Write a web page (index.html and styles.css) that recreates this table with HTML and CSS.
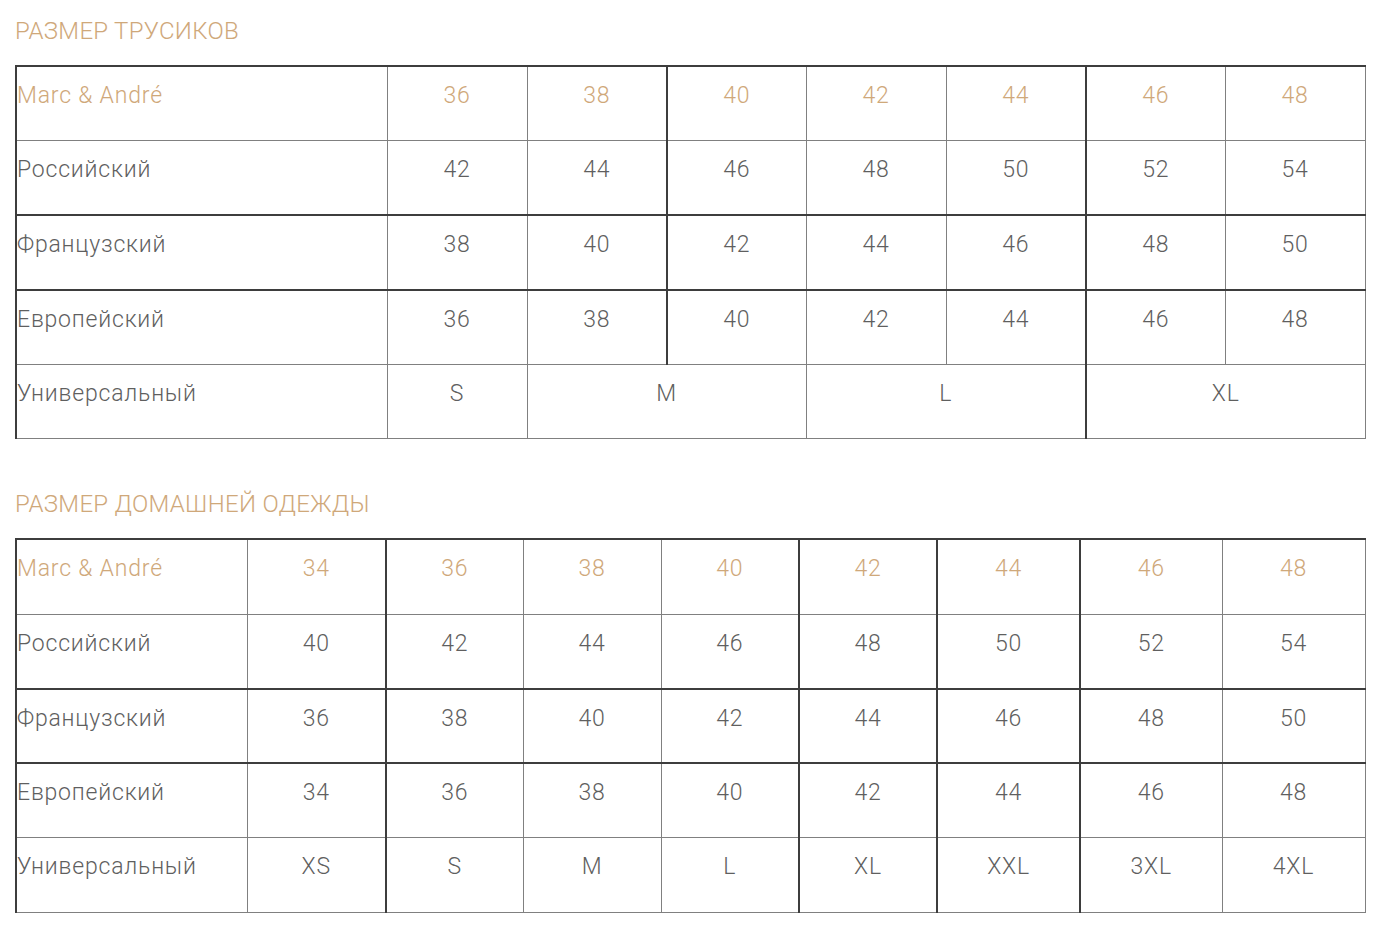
FILE: index.html
```html
<!DOCTYPE html>
<html lang="ru">
<head>
<meta charset="utf-8">
<title>Размеры</title>
<link rel="stylesheet" href="styles.css">
</head>
<body>
<section class="block">
  <h2 class="title">РАЗМЕР ТРУСИКОВ</h2>
  <table class="sizes t1">
    <colgroup>
      <col class="c-label1"><col class="c140"><col class="c140"><col class="c139"><col class="c140"><col class="c140"><col class="c139"><col class="c140">
    </colgroup>
    <tr class="head">
      <td class="label">Marc &amp; André</td><td>36</td><td>38</td><td class="dl">40</td><td>42</td><td>44</td><td class="dl">46</td><td>48</td>
    </tr>
    <tr>
      <td class="label">Российский</td><td>42</td><td>44</td><td class="dl">46</td><td>48</td><td>50</td><td class="dl">52</td><td>54</td>
    </tr>
    <tr class="dt">
      <td class="label">Французский</td><td>38</td><td>40</td><td class="dl">42</td><td>44</td><td>46</td><td class="dl">48</td><td>50</td>
    </tr>
    <tr class="dt">
      <td class="label">Европейский</td><td>36</td><td>38</td><td class="dl">40</td><td>42</td><td>44</td><td class="dl">46</td><td>48</td>
    </tr>
    <tr>
      <td class="label">Универсальный</td><td>S</td><td colspan="2">M</td><td colspan="2">L</td><td colspan="2" class="dl">XL</td>
    </tr>
  </table>
</section>

<section class="block second">
  <h2 class="title">РАЗМЕР ДОМАШНЕЙ ОДЕЖДЫ</h2>
  <table class="sizes t2">
    <colgroup>
      <col class="c-label2"><col class="c139"><col class="c137"><col class="c138"><col class="c138"><col class="c138"><col class="c143"><col class="c142"><col class="c143">
    </colgroup>
    <tr class="head">
      <td class="label">Marc &amp; André</td><td>34</td><td class="dl">36</td><td>38</td><td>40</td><td class="dl">42</td><td class="dl">44</td><td class="dl">46</td><td>48</td>
    </tr>
    <tr>
      <td class="label">Российский</td><td>40</td><td class="dl">42</td><td>44</td><td>46</td><td class="dl">48</td><td class="dl">50</td><td class="dl">52</td><td>54</td>
    </tr>
    <tr class="dt">
      <td class="label">Французский</td><td>36</td><td class="dl">38</td><td>40</td><td>42</td><td class="dl">44</td><td class="dl">46</td><td class="dl">48</td><td>50</td>
    </tr>
    <tr class="dt">
      <td class="label">Европейский</td><td>34</td><td class="dl">36</td><td>38</td><td>40</td><td class="dl">42</td><td class="dl">44</td><td class="dl">46</td><td>48</td>
    </tr>
    <tr>
      <td class="label">Универсальный</td><td>XS</td><td class="dl">S</td><td>M</td><td>L</td><td class="dl">XL</td><td class="dl">XXL</td><td class="dl">3XL</td><td>4XL</td>
    </tr>
  </table>
</section>
</body>
</html>
```

FILE: styles.css
```css
html, body {
  margin: 0;
  padding: 0;
  background: #ffffff;
}

body {
  font-family: Roboto, "Liberation Sans", Arial, sans-serif;
  font-weight: 300;
  color: #5f5f5f;
  padding: 16px 15px 0 15px;
}

.block {
  width: 1350px;
}

.second {
  margin-top: 50px;
}

.title {
  margin: 0 0 19px 0;
  font-size: 24px;
  line-height: 30px;
  font-weight: 300;
  color: #cfa87a;
  letter-spacing: 0.3px;
}

.sizes {
  width: 1350px;
  table-layout: fixed;
  border-collapse: collapse;
  border-top: 2px solid #3d3d3d;
  border-left: 2px solid #3d3d3d;
  border-right: 1px solid #808080;
  border-bottom: 1px solid #808080;
}

.sizes td {
  border: 1px solid #808080;
  height: 74.6px;
  padding: 16px 0 0 0;
  box-sizing: border-box;
  vertical-align: top;
  text-align: center;
  font-size: 23px;
  line-height: 26px;
  letter-spacing: 0.8px;
  color: #5f5f5f;
}

.sizes td.label {
  text-align: left;
  padding-left: 0;
}

.sizes tr.head td {
  color: #cfa87a;
}

.sizes tr.dt td {
  border-top: 2px solid #3d3d3d;
}

.sizes td.dl {
  border-left: 2px solid #3d3d3d;
}

.c-label1 { width: 371px; }
.c-label2 { width: 231px; }
.c137 { width: 137px; }
.c138 { width: 138px; }
.c139 { width: 139px; }
.c140 { width: 140px; }
.c142 { width: 142px; }
.c143 { width: 143px; }
```
